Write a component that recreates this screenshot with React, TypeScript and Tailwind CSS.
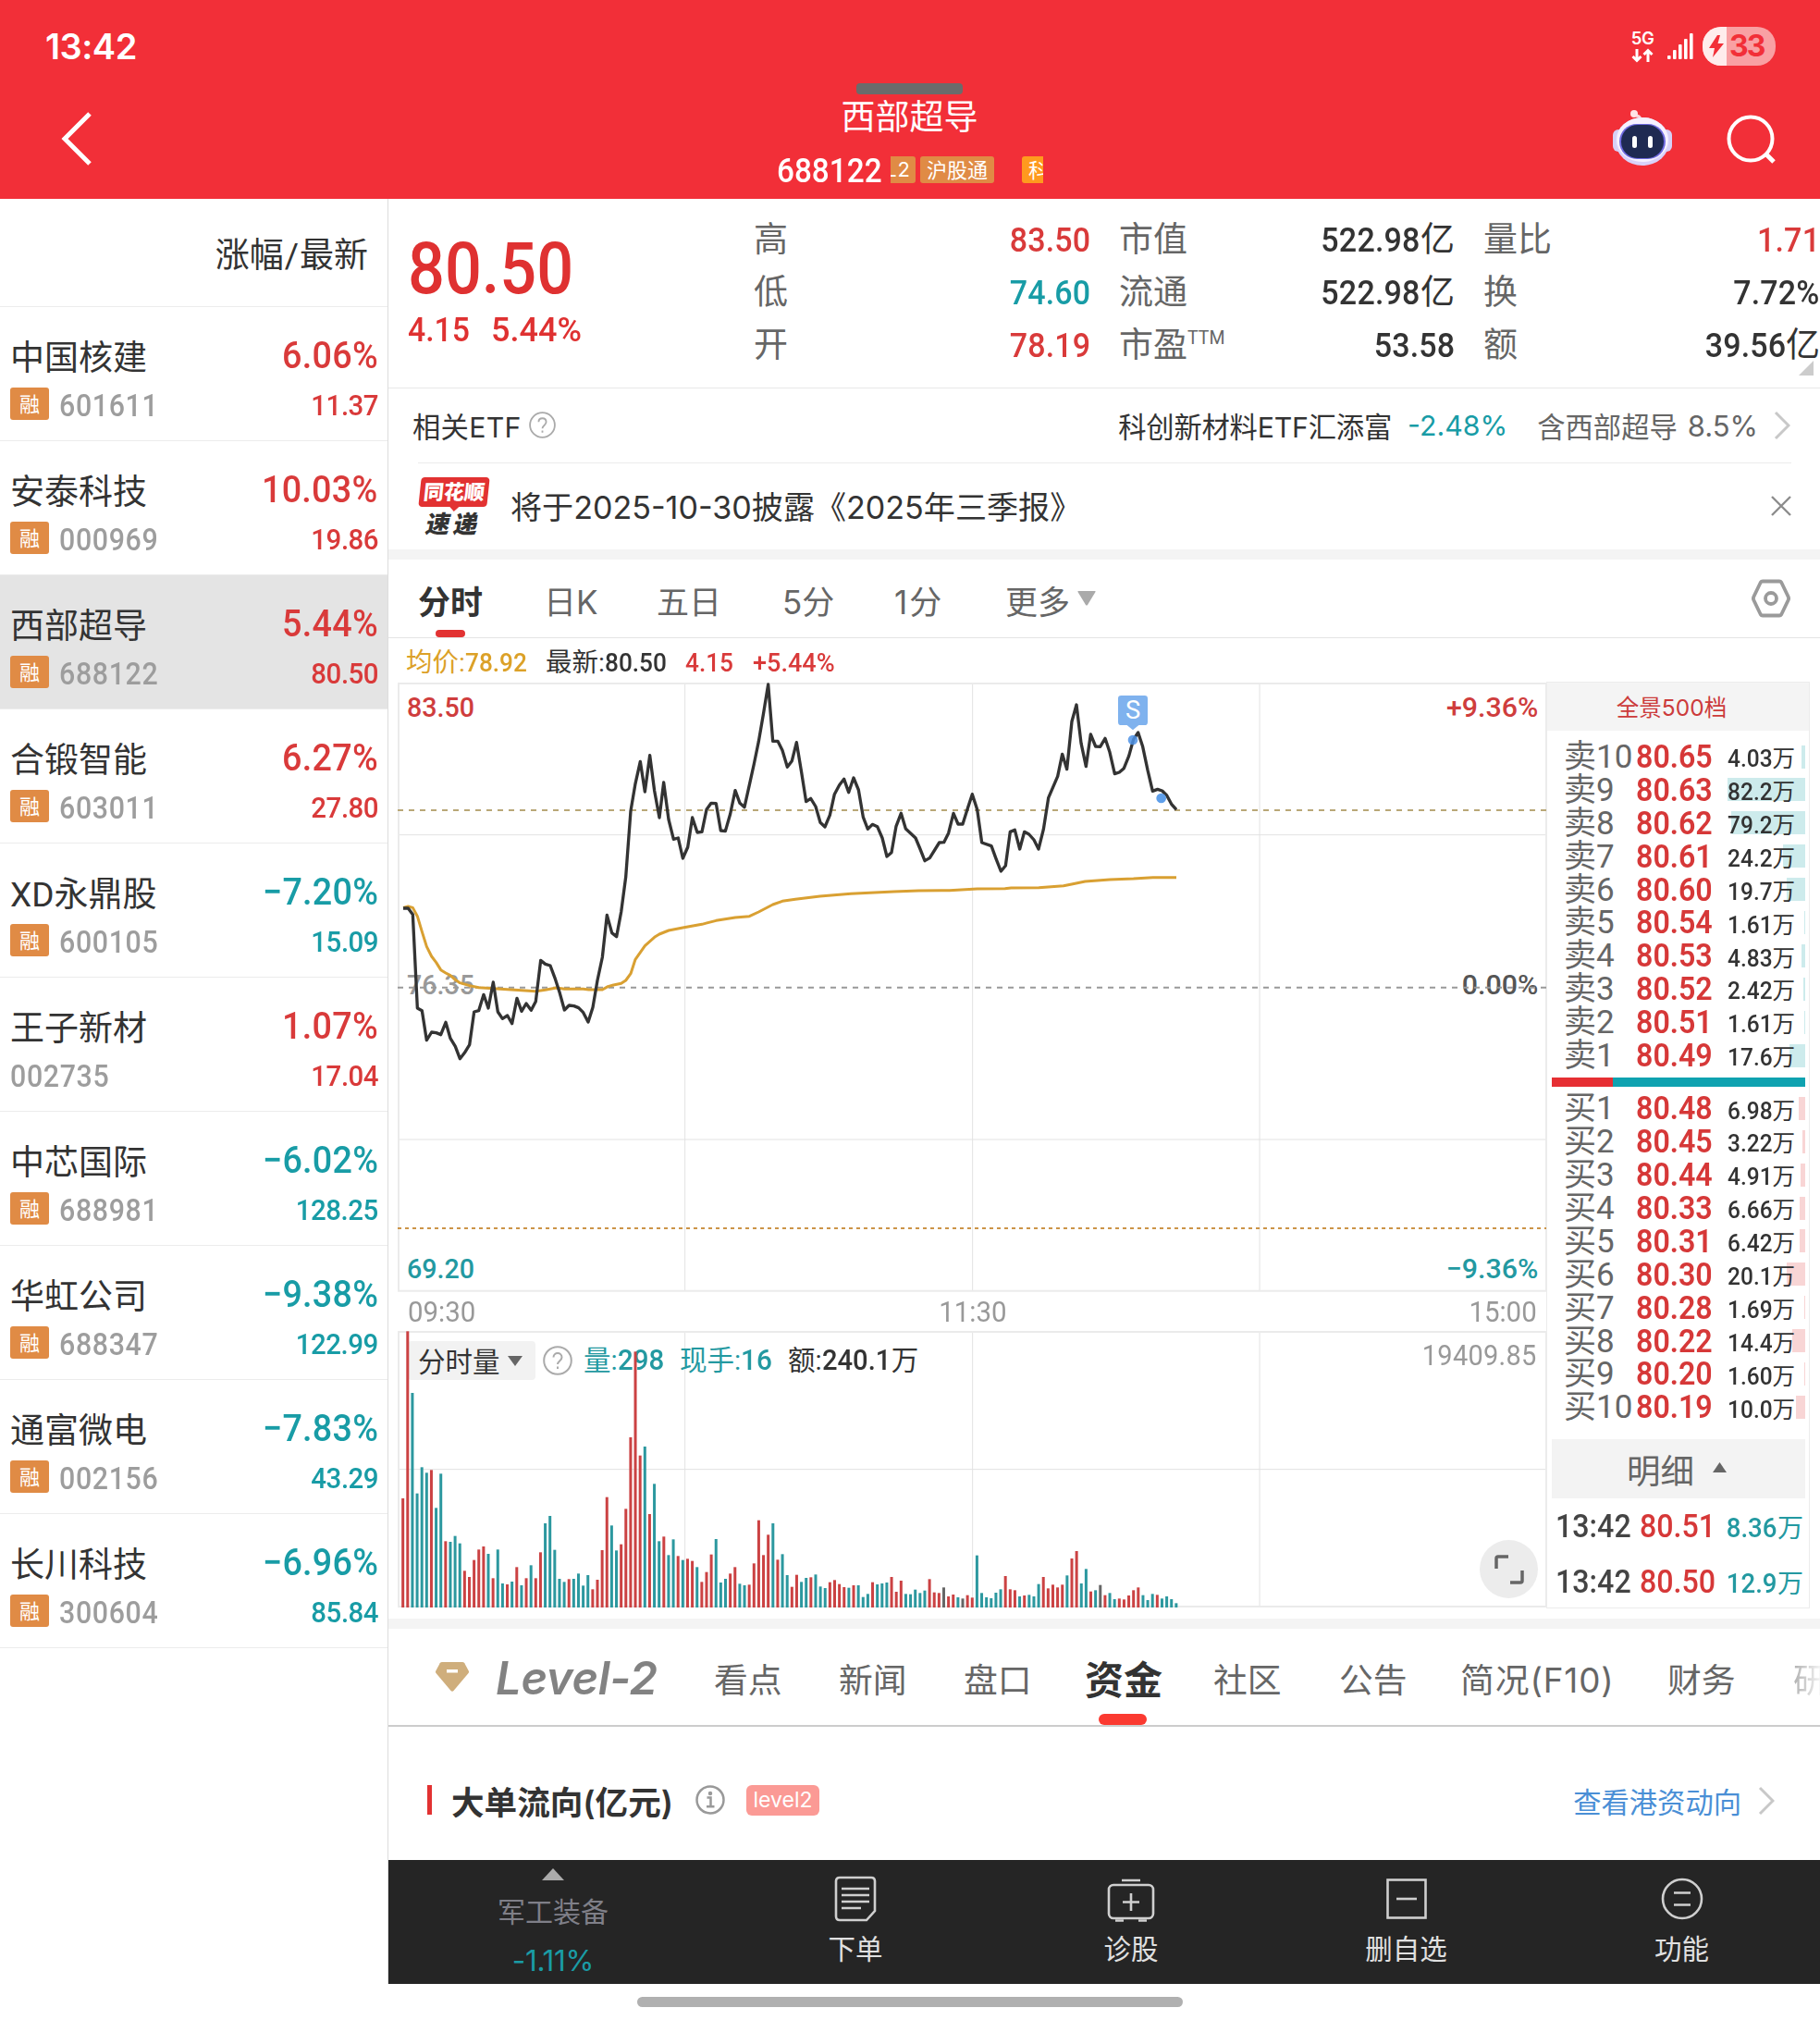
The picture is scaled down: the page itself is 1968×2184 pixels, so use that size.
import React from "react";

const stocks = [
  { name: "中国核建", code: "601611", pct: "6.06%", price: "11.37", up: true, margin: true },
  { name: "安泰科技", code: "000969", pct: "10.03%", price: "19.86", up: true, margin: true },
  { name: "西部超导", code: "688122", pct: "5.44%", price: "80.50", up: true, margin: true, active: true },
  { name: "合锻智能", code: "603011", pct: "6.27%", price: "27.80", up: true, margin: true },
  { name: "XD永鼎股", code: "600105", pct: "−7.20%", price: "15.09", up: false, margin: true },
  { name: "王子新材", code: "002735", pct: "1.07%", price: "17.04", up: true, margin: false },
  { name: "中芯国际", code: "688981", pct: "−6.02%", price: "128.25", up: false, margin: true },
  { name: "华虹公司", code: "688347", pct: "−9.38%", price: "122.99", up: false, margin: true },
  { name: "通富微电", code: "002156", pct: "−7.83%", price: "43.29", up: false, margin: true },
  { name: "长川科技", code: "300604", pct: "−6.96%", price: "85.84", up: false, margin: true },
];

// label, price, volume, depth bar width
const asks: [string, string, string, number][] = [
  ["卖10", "80.65", "4.03", 4],
  ["卖9", "80.63", "82.2", 84],
  ["卖8", "80.62", "79.2", 80],
  ["卖7", "80.61", "24.2", 24],
  ["卖6", "80.60", "19.7", 20],
  ["卖5", "80.54", "1.61", 1],
  ["卖4", "80.53", "4.83", 4],
  ["卖3", "80.52", "2.42", 2],
  ["卖2", "80.51", "1.61", 1],
  ["卖1", "80.49", "17.6", 17],
];

const bids: [string, string, string, number][] = [
  ["买1", "80.48", "6.98", 7],
  ["买2", "80.45", "3.22", 3],
  ["买3", "80.44", "4.91", 5],
  ["买4", "80.33", "6.66", 6],
  ["买5", "80.31", "6.42", 6],
  ["买6", "80.30", "20.1", 20],
  ["买7", "80.28", "1.69", 1],
  ["买8", "80.22", "14.4", 14],
  ["买9", "80.20", "1.60", 1],
  ["买10", "80.19", "10.0", 10],
];

// chart units are thirds of a pixel
const priceLine =
  "48,786 64,786 79,806 94,1110 109,1118 124,1214 140,1188 155,1190 170,1196 186,1156 201,1208 217,1234 232,1274 247,1255 263,1229 278,1122 293,1118 309,1066 324,1110 340,1026 355,1122 370,1144 386,1134 401,1160 417,1078 432,1120 447,1095 463,1117 478,1088 494,955 509,967 525,972 540,1012 555,1058 571,1116 586,1101 602,1103 617,1109 632,1124 648,1155 663,1108 678,1020 694,945 709,808 725,866 740,878 755,798 770,685 786,470 801,382 817,310 832,408 848,290 863,405 879,492 893,378 909,498 925,562 940,558 955,624 971,588 986,492 1002,540 1017,538 1032,466 1047,445 1063,446 1078,534 1093,536 1109,480 1125,404 1140,445 1155,458 1171,386 1186,318 1201,245 1217,152 1232,60 1247,244 1263,244 1278,274 1294,328 1309,308 1324,248 1340,345 1355,440 1370,430 1386,456 1401,508 1416,522 1432,484 1447,416 1463,386 1478,367 1493,410 1509,363 1525,402 1540,490 1555,529 1570,514 1586,521 1602,558 1617,618 1632,605 1647,520 1663,478 1678,528 1710,558 1725,594 1740,632 1756,623 1787,573 1802,572 1817,542 1833,478 1848,513 1863,513 1879,462 1894,416 1910,466 1925,573 1956,584 1971,625 1987,666 2002,648 2017,538 2032,532 2048,594 2063,538 2078,546 2094,564 2109,594 2125,530 2141,428 2171,358 2186,286 2201,335 2217,180 2232,126 2247,250 2263,326 2278,222 2294,261 2309,262 2325,235 2340,280 2356,350 2371,345 2386,332 2402,292 2417,238 2432,216 2447,262 2463,338 2479,406 2495,400 2510,405 2525,420 2540,448 2556,466";

const averageLine =
  "48,784 64,780 79,784 94,812 109,862 124,910 140,942 155,962 170,986 186,996 201,1004 217,1018 232,1028 263,1037 293,1043 340,1046 386,1049 432,1052 478,1055 509,1051 545,1044 571,1048 632,1048 650,1050 694,1050 712,1040 730,1035 755,1030 770,1020 786,998 801,952 832,908 863,880 879,870 909,858 955,849 1017,838 1063,826 1125,816 1171,812 1201,798 1247,774 1278,763 1320,757 1400,747 1500,739 1640,732 1720,729 1820,728 1910,723 2000,722 2020,720 2110,719 2190,713 2220,707 2260,699 2340,693 2417,690 2480,686 2556,686";

// r = up, t = down, g = flat, followed by the top of the bar
const volumes =
  "r720 r178 t378 t704 t619 t637 r628 t751 t640 r859 t861 t842 t866 r955 r975 r920 r886 r876 t900 r979 t886 t996 r999 t990 r943 t1002 r979 t937 r979 r895 t801 t777 t887 t981 t991 r982 t981 t964 t1003 t969 r1015 r984 r888 r716 t808 t889 r869 r754 r522 r244 r581 t552 r771 t673 t859 r844 t904 t853 r907 t920 r916 r923 t943 r991 r959 r902 t852 t993 t981 r964 r943 t997 t1002 r1000 r931 r791 r904 r838 t801 r919 t901 t969 r1007 r968 t991 t978 r976 t967 t1006 t1011 r992 r985 r998 r1008 t1010 r1002 t1002 t1040 t1030 r992 t999 t996 t993 r975 r1023 r987 t1030 t1031 t1016 t1027 t1019 r982 r1025 r1027 g1009 r1038 r1032 t1041 g1045 r1034 r1042 t905 t1027 t1041 t1044 t1026 t1015 r972 r1015 r1018 t1038 r1035 t1033 t1038 t998 r975 r1012 r1000 r1009 r1000 t970 r915 r891 t996 t949 r1022 t1018 g1001 r1034 t1027 t1047 r1045 r1048 r1035 r1018 r1009 t1034 t1050 t1030 r1033 t1045 t1038 t1047 t1060".split(
    " "
  );

const barColors: Record<string, string> = { r: "#cb4243", t: "#2c989f", g: "#666666" };

const NUM = "font-['Roboto','Noto_Sans_CJK_SC',sans-serif]";

// narrow digits, squeezed towards the side they are aligned to
const NARROW_L = "inline-block origin-left scale-x-[0.92]";
const NARROW_R = "inline-block origin-right scale-x-[0.92]";

const Header = () => (
  <header className="relative h-[215px] shrink-0 bg-[#f22f38] text-white">
    <div className="flex h-[100px] items-center justify-between pl-[49px] pr-[48px]">
      <div className="text-[38px] font-semibold tracking-[-0.5px]">13:42</div>
      <div className="flex items-center">
        <div className="flex w-[24px] flex-col items-center">
          <span className="text-[18.5px] font-semibold leading-[17px] tracking-[-0.5px]">5G</span>
          <svg className="mt-[2px] h-[16px] w-[24px]" viewBox="0 0 24 16" fill="none" stroke="white" strokeWidth="3">
            <path d="M6 1v13M1.500 9L6 13.500 10.500 9M18 15V2M13.500 7L18 2.500 22.500 7" />
          </svg>
        </div>
        <svg className="ml-[15px] h-[28px] w-[28px]" viewBox="0 0 28 28" fill="white">
          <rect x="0" y="24" width="3.600" height="4" rx="1" />
          <rect x="6" y="18" width="3.600" height="10" rx="1" />
          <rect x="12" y="12" width="3.600" height="16" rx="1" />
          <rect x="18" y="6" width="3.600" height="22" rx="1" />
          <rect x="24" y="0" width="3.600" height="28" rx="1" />
        </svg>
        <div className="ml-[10px] flex h-[42px] w-[79px] items-center overflow-hidden rounded-[20px] bg-[#f9a0a3]">
          <div className="flex h-full w-[26px] items-center justify-center bg-[#ffecec]">
            <svg className="ml-[4px] h-[24px] w-[16px]" viewBox="0 0 16 24" fill="#f22f38">
              <path d="M9 0L0 14h6L4 24 16 9H9.500L12 0z" />
            </svg>
          </div>
          <span className="ml-[3px] text-[32px] font-bold leading-none tracking-[-2px] text-[#f22f38]">33</span>
        </div>
      </div>
    </div>

    <div className="absolute left-[926px] top-[90px] h-[12px] w-[115px] rounded-[4px] bg-[#6b6b6b]" />

    <div className="flex h-[115px] items-start justify-between">
      <div className="flex h-[100px] w-[840px] items-center pl-[64px]">
        <svg className="h-[60px] w-[36px]" viewBox="0 0 36 60" fill="none" stroke="white" strokeWidth="5">
          <path d="M33 3L6 30l27 27" />
        </svg>
      </div>

      <div className="w-[288px]">
        <div className="h-[52px] pr-px text-center text-[37px] leading-[54px]">西部超导</div>
        <div className="flex h-[63px] items-center">
          <span className={`${NUM} w-[123px] pt-px text-[37px] font-medium leading-none`}>
            <span className="inline-block origin-left scale-x-[0.9]">688122</span>
          </span>
          <span className="flex h-[29px] w-[27px] justify-end overflow-hidden rounded-r-[3px] bg-[#e08b45] pr-[5px] text-[22px] leading-[29px] tracking-[1px]">
            L2
          </span>
          <span className="ml-[5px] h-[29px] w-[80px] rounded-[3px] bg-[#e08b45] text-center text-[22px] leading-[30px]">沪股通</span>
          <span className="ml-[30px] h-[29px] w-[23px] overflow-hidden rounded-l-[3px] bg-[#ff9a1e] pl-[7px] text-[22px] leading-[30px]">
            科
          </span>
        </div>
      </div>

      <div className="flex h-[100px] w-[840px] items-center justify-end pr-[46px]">
        <svg className="h-[64px] w-[66px]" viewBox="0 0 66 64">
          <path d="M31 16c1-6-1-9-5-9" fill="none" stroke="#f9d5dc" strokeWidth="3" />
          <circle cx="24" cy="5" r="4" fill="#ffe3e6" />
          <rect x="1" y="22" width="12" height="24" rx="6" fill="#d6d0f7" />
          <rect x="53" y="22" width="12" height="24" rx="6" fill="#d6d0f7" />
          <ellipse cx="33" cy="35" rx="29" ry="26" fill="#d9d2fa" />
          <ellipse cx="33" cy="33" rx="28" ry="24" fill="#f6f1ff" />
          <rect x="8" y="16" width="50" height="38" rx="19" fill="#6f6ae0" />
          <rect x="10" y="17" width="46" height="36" rx="18" fill="#1f2a52" />
          <rect x="22" y="29" width="5" height="13" rx="2.500" fill="white" />
          <rect x="39" y="29" width="5" height="13" rx="2.500" fill="white" />
        </svg>
        <svg className="ml-[57px] h-[56px] w-[56px]" viewBox="0 0 56 56" fill="none" stroke="white" strokeWidth="4">
          <circle cx="27" cy="28" r="23.500" />
          <path d="M43 44l9 9" strokeWidth="5" />
        </svg>
      </div>
    </div>
  </header>
);

const Sidebar = () => (
  <aside className={`${NUM} w-[420px] shrink-0 border-r border-[#dddddd]`}>
    <div className="flex h-[117px] items-center justify-end border-b border-[#ececec] pr-[21px] pt-[8px] text-[37px] text-[#333]">
      涨幅<span className="px-px">/</span>最新
    </div>
    {stocks.map((s) => (
      <div
        key={s.code}
        className={`h-[145px] border-b border-[#ececec] pl-[11px] pr-[10px] pt-[26px] ${s.active ? "bg-[#e4e4e4]" : ""}`}
      >
        <div className="flex h-[52px] items-center justify-between">
          <span className="pt-[6px] text-[37px] leading-none text-[#333]">{s.name}</span>
          <span className={`${NARROW_R} text-[41px] font-medium leading-none tracking-[0.3px] ${s.up ? "text-[#d93a3a]" : "text-[#189ca6]"}`}>
            {s.pct}
          </span>
        </div>
        <div className="flex h-[53px] items-center justify-between">
          <div className="flex items-center">
            {s.margin && (
              <span className="mr-[11px] h-[35px] w-[42px] rounded-[3px] bg-[#e08b45] text-center text-[22px] leading-[38px] text-white">
                融
              </span>
            )}
            <span className={`${NARROW_L} pt-[3px] text-[33px] font-medium leading-none tracking-[0.7px] text-[#9d9d9d]`}>{s.code}</span>
          </div>
          <span
            className={`${NARROW_R} pt-[3px] text-[32px] font-medium leading-none tracking-[-0.5px] ${s.up ? "text-[#d93a3a]" : "text-[#189ca6]"}`}
          >
            {s.price}
          </span>
        </div>
      </div>
    ))}
  </aside>
);

type StatProps = { label: string; value: string; unit?: string; color?: string; sup?: string };

const Stat = ({ label, value, unit = "", color = "text-[#333]", sup = "" }: StatProps) => (
  <div className={`${NUM} flex h-[57px] items-center justify-between`}>
    <span className="flex text-[37px] leading-[44px] text-[#666]">
      {label}
      {sup && <span className="text-[19.5px] leading-[28px]">{sup}</span>}
    </span>
    <span className={`text-[37px] leading-none ${color}`}>
      <span className={`${NARROW_R} font-medium tracking-[0.2px]`}>{value}</span>
      {unit}
    </span>
  </div>
);

const Quote = () => (
  <div className="relative flex h-[205px] shrink-0 border-b border-[#e8e8e8]">
    <div className={`${NUM} w-[395px] pl-[21px] pt-[31px] text-[#df3131]`}>
      <div className="h-[90px] origin-left scale-x-[0.9] text-[78px] font-medium leading-[90px]">80.50</div>
      <div className="flex h-[40px] items-center text-[37.5px] font-medium">
        <span className="w-[90px]">
          <span className="inline-block origin-left scale-x-[0.9]">4.15</span>
        </span>
        <span className="inline-block origin-left scale-x-[0.96]">5.44%</span>
      </div>
    </div>
    <div className="grid grid-cols-[364px_363px_364px] content-start gap-x-[31px] pt-[16px]">
      <div>
        <Stat label="高" value="83.50" color="text-[#d93a3a]" />
        <Stat label="低" value="74.60" color="text-[#189ca6]" />
        <Stat label="开" value="78.19" color="text-[#d93a3a]" />
      </div>
      <div>
        <Stat label="市值" value="522.98" unit="亿" />
        <Stat label="流通" value="522.98" unit="亿" />
        <Stat label="市盈" sup="TTM" value="53.58" />
      </div>
      <div>
        <Stat label="量比" value="1.71" color="text-[#d93a3a]" />
        <Stat label="换" value="7.72%" />
        <Stat label="额" value="39.56" unit="亿" />
      </div>
    </div>
    <svg className="absolute right-[7px] top-[175px] h-[16px] w-[16px]" viewBox="0 0 16 16" fill="#cccccc">
      <path d="M16 0v16H0z" />
    </svg>
  </div>
);

const Help = ({ size }: { size: string }) => (
  <svg className={size} viewBox="0 0 32 32" fill="none" stroke="#aaaaaa" strokeWidth="2">
    <circle cx="16" cy="16" r="14.800" />
    <path d="M11.500 12.500c0-6 9-6 9 0 0 4-4.500 4-4.500 7.500M16 22.500v2.500" />
  </svg>
);

const Chevron = () => (
  <svg className="h-[32px] w-[18px]" viewBox="0 0 18 32" fill="none" stroke="#c8c8c8" strokeWidth="3">
    <path d="M2 2l14 14L2 30" />
  </svg>
);

const News = () => (
  <>
    <div className="ml-[26px] mr-[32px] flex h-[80px] shrink-0 items-center text-[30.3px] text-[#333]">
      <span className="pt-[5px] tracking-[0.3px]">相关ETF</span>
      <Help size="ml-[8px] mb-[2px] h-[29px] w-[29px]" />
      <span className="ml-auto pt-[5px] tracking-[-0.2px]">科创新材料ETF汇添富</span>
      <span className="ml-[17px] pt-[2px] text-[#189ca6]">-2.48%</span>
      <span className="ml-[32px] pt-[5px] text-[#666]">含西部超导</span>
      <span className="ml-[11px] mr-[17px] pt-[2px] text-[31px] text-[#666]">8.5%</span>
      <Chevron />
    </div>
    <div className="ml-[32px] mr-[31px] flex h-[94px] shrink-0 items-center border-t border-[#ececec]">
      <div className="w-[78px] text-center font-black leading-none">
        <div className="relative mx-[2px] h-[32px] -skew-x-6 rounded-[4px] bg-[#e23232] text-[22px] leading-[33px] text-white">
          同花顺
          <svg className="absolute left-[33px] top-[31px] h-[6px] w-[12px]" viewBox="0 0 12 6" fill="#e23232">
            <path d="M0 0h12L6 6z" />
          </svg>
        </div>
        <div className="mt-[6px] -skew-x-12 text-[26px] tracking-[4px] text-[#333]">速递</div>
      </div>
      <span className="ml-[22px] pt-[3px] text-[34.1px] text-[#333]">将于2025-10-30披露《2025年三季报》</span>
      <svg className="ml-auto mb-[2px] h-[22px] w-[22px]" viewBox="0 0 22 22" stroke="#8c8c8c" strokeWidth="2.400">
        <path d="M1 1l20 20M21 1L1 21" />
      </svg>
    </div>
    <div className="h-[11px] shrink-0 bg-[#f4f4f4]" />
  </>
);

const PeriodTabs = () => (
  <>
    <div className="flex h-[85px] shrink-0 items-center border-b border-[#e4e4e4] pl-[32px] pr-[32px] pt-[8px] text-[35px] text-[#666]">
      <span className="relative flex h-full w-[136px] items-center font-semibold text-[#333]">
        分时
        <span className="absolute bottom-0 left-[19px] h-[8px] w-[32px] rounded-[4px] bg-[#e23232]" />
      </span>
      <span className="w-[122px]">日K</span>
      <span className="w-[136px]">五日</span>
      <span className="w-[121px]">5分</span>
      <span className="w-[120px] tracking-[2px]">1分</span>
      <span className="flex items-center gap-[8px]">
        更多
        <svg className="mb-[8px] h-[16px] w-[20px]" viewBox="0 0 20 16" fill="#aaaaaa">
          <path d="M1 0h18q1 0 .5 1L11 15q-1 1-2 0L.5 1Q0 0 1 0z" />
        </svg>
      </span>
      <svg className="mb-[8px] ml-auto h-[42px] w-[42px]" viewBox="0 0 42 42" fill="none" stroke="#9a9a9a" strokeWidth="3.800">
        <path d="M12 2.500h18q1.500 0 2.300 1.300l7.400 15.400q.8 1.800 0 3.600l-7.400 15.400q-.8 1.300-2.300 1.300H12q-1.500 0-2.300-1.300L2.300 22.800q-.8-1.800 0-3.600L9.700 3.800Q10.500 2.500 12 2.500z" />
        <circle cx="21" cy="21" r="6" />
      </svg>
    </div>
    <div className={`${NUM} flex h-[48px] shrink-0 items-center pl-[19px] pt-[6px] text-[28.5px] font-medium`}>
      <span className="w-[151px] text-[#dca128]">
        <span className="font-normal">均价:</span>
        <span className={NARROW_L}>78.92</span>
      </span>
      <span className="w-[151px] text-[#333]">
        <span className="font-normal">最新:</span>
        <span className={NARROW_L}>80.50</span>
      </span>
      <span className="w-[73px] text-[#d93a3a]">
        <span className={NARROW_L}>4.15</span>
      </span>
      <span className="inline-block origin-left scale-x-[0.95] text-[#d93a3a]">+5.44%</span>
    </div>
  </>
);

const PriceChart = () => (
  <svg className="ml-[10px] h-[659px] w-[1242px] shrink-0 font-['Roboto'] font-medium" viewBox="30 54 3726 1977" fontSize="91">
    <g fill="none" stroke="#e2e2e2" strokeWidth="3">
      <path d="M962 57V2027M1895 57V2027M2826 57V2027M33 548H3756M33 1536H3756" />
      <path d="M33 57H3756V2027H33z" stroke="#ebebeb" strokeWidth="6" />
    </g>
    <text x="60" y="165" fill="#cf3d3d" textLength="219" lengthAdjust="spacingAndGlyphs">83.50</text>
    <text x="60" y="1064" fill="#999999" textLength="219" lengthAdjust="spacingAndGlyphs">76.35</text>
    <text x="60" y="1985" fill="#2399a1" textLength="219" lengthAdjust="spacingAndGlyphs">69.20</text>
    <text x="3730" y="165" fill="#cf3d3d" textAnchor="end">+9.36%</text>
    <text x="3730" y="1064" fill="#555555" textAnchor="end">0.00%</text>
    <text x="3730" y="1985" fill="#2399a1" textAnchor="end">−9.36%</text>
    <path d="M30 468H3756" stroke="#b9a777" strokeWidth="6" strokeDasharray="18 18" />
    <path d="M30 1043H3756" stroke="#999999" strokeWidth="6" strokeDasharray="18 18" />
    <path d="M30 1824H3756" stroke="#cc9448" strokeWidth="6" strokeDasharray="12 12" />
    <polyline points={averageLine} fill="none" stroke="#d9a032" strokeWidth="9" strokeLinejoin="round" />
    <polyline points={priceLine} fill="none" stroke="#333333" strokeWidth="10" strokeLinejoin="round" />
    <g fill="#7fb2ee">
      <rect x="2367" y="96" width="96" height="96" rx="10" />
      <path d="M2393 190h44l-22 18z" />
      <text x="2415" y="172" fill="white" fontSize="82" fontWeight="400" textAnchor="middle">S</text>
    </g>
    <circle cx="2415" cy="240" r="16" fill="#4f93e6" fillOpacity="0.850" />
    <circle cx="2507" cy="429" r="16" fill="#5f9fea" />
  </svg>
);

const VolumeChart = () => (
  <div className="relative ml-[10px] h-[300px] w-[1242px] shrink-0">
    <svg className="absolute inset-0 h-full w-full" viewBox="30 174 3726 900" fill="none" stroke="#e2e2e2" strokeWidth="3">
      <path d="M962 180V1074M1895 180V1074M2826 180V1074M33 626H3756" />
      <path d="M33 180H3756V1071H33z" stroke="#ebebeb" strokeWidth="6" />
    </svg>
    <div className={`${NUM} relative flex h-[54px] items-center pl-[11px] pt-[12px] text-[29.5px] font-medium`}>
      <span className="flex h-[42px] w-[138px] items-center rounded-[4px] bg-[#f2f2f2] pl-[11px] pt-[4px] font-normal text-[#333]">
        分时量
        <svg className="mb-[4px] ml-[8px] h-[11px] w-[16px]" viewBox="0 0 16 11" fill="#666666">
          <path d="M0 0h16L8 11z" />
        </svg>
      </span>
      <Help size="ml-[8px] h-[32px] w-[32px]" />
      <span className="ml-[12px] w-[104px] text-[#2399a1]">
        <span className="font-normal">量:</span>
        <span className="inline-block origin-left scale-x-[0.95] text-[31px]">298</span>
      </span>
      <span className="w-[117px] text-[#2399a1]">
        <span className="font-normal">现手:</span>
        <span className="inline-block origin-left scale-x-[0.96] text-[31px]">16</span>
      </span>
      <span className="text-[#333]">
        <span className="font-normal">额:</span>
        <span className="mr-[-4px] inline-block origin-left scale-x-[0.94] text-[31px]">240.1</span>
        <span className="font-normal">万</span>
      </span>
      <span className={`${NARROW_R} mb-[11px] ml-auto mr-[10px] text-[31.5px] font-normal tracking-[0.3px] text-[#999]`}>19409.85</span>
    </div>
    <svg className="absolute inset-0 h-full w-full" viewBox="30 174 3726 900">
      {volumes.map((v, i) => {
        const top = Number(v.slice(1));
        return <rect key={i} x={42.5 + i * 15.39} y={top} width="9" height={1074 - top} fill={barColors[v[0]]} />;
      })}
    </svg>
    <div className="absolute left-[1170px] top-[227px] flex h-[63px] w-[63px] items-center justify-center rounded-full bg-[#ececec]">
      <svg className="h-[32px] w-[32px]" viewBox="0 0 32 32" fill="none" stroke="#666666" strokeWidth="3.500">
        <path d="M2 15V4q0-2 2-2h11M30 17v11q0 2-2 2H17" />
      </svg>
    </div>
  </div>
);

const DepthRow = ({ row, bar }: { row: [string, string, string, number]; bar: string }) => (
  <div className={`${NUM} relative flex h-[35.9px] items-center pl-[18px] leading-none`}>
    <div className={`absolute right-[4px] top-[5px] h-[25px] ${bar}`} style={{ width: row[3] }} />
    <span className="w-[78px] whitespace-nowrap text-[35px] text-[#666]">{row[0]}</span>
    <span className={`${NARROW_L} text-[35px] font-semibold text-[#d63838]`}>{row[1]}</span>
    <span className="relative ml-auto pr-[15px] pt-[4px] text-[26px] font-medium text-[#333]">
      <span className="inline-block origin-right scale-x-[0.94]">{row[2]}</span>
      <span className="text-[24.5px] font-normal">万</span>
    </span>
  </div>
);

const OrderBook = () => (
  <div className="mt-[-1px] h-[1002px] w-[285px] shrink-0 border border-[#ececec]">
    <div className="h-[52px] bg-[#f4f4f4] pr-[14px] pt-px text-center text-[24.5px] leading-[52px] text-[#cc3b3b]">全景500档</div>
    <div className="pt-[10.5px]">
      {asks.map((r) => (
        <DepthRow key={r[0]} row={r} bar="bg-[#cdebec]" />
      ))}
    </div>
    <div className="ml-[5px] mt-[6px] flex h-[10px] w-[274px]">
      <div className="w-[66px] bg-[#e62f33]" />
      <div className="flex-1 bg-[#0fa2b0]" />
    </div>
    <div className="pt-[5.5px]">
      {bids.map((r) => (
        <DepthRow key={r[0]} row={r} bar="bg-[#f8d5d5]" />
      ))}
    </div>
    <div className="ml-[5px] mt-[16px] flex h-[64px] w-[274px] items-center justify-center bg-[#f3f3f3] pr-[4px] pt-[8px] text-[36.5px] text-[#666]">
      明细
      <svg className="mb-[10px] ml-[20px] h-[11px] w-[15px]" viewBox="0 0 15 11" fill="#666666">
        <path d="M0 11h15L7.500 0z" />
      </svg>
    </div>
    {[
      ["80.51", "8.36"],
      ["80.50", "12.9"],
    ].map((t) => (
      <div key={t[0]} className={`${NUM} flex h-[59.5px] items-center pl-[9px] pr-[6px] pt-[2px] text-[35px] font-medium leading-none`}>
        <span className="w-[91px] text-[#444]">
          <span className={NARROW_L}>13:42</span>
        </span>
        <span className={`${NARROW_L} text-[#d63838]`}>{t[0]}</span>
        <span className="ml-auto pt-[3px] text-[30px] text-[#2399a1]">
          <span className={NARROW_R}>{t[1]}</span>
          <span className="text-[28px] font-normal">万</span>
        </span>
      </div>
    ))}
  </div>
);

const SectionTabs = () => (
  <>
    <div className="h-[11px] shrink-0 bg-[#f4f4f4]" />
    <div className="flex h-[106px] shrink-0 items-center overflow-hidden whitespace-nowrap border-b-2 border-[#cccccc] pl-[51px] pt-[7px] text-[36.8px] text-[#666] *:shrink-0">
      <svg className="mb-[7px] h-[32px] w-[36px]" viewBox="0 0 36 32">
        <path d="M7 0h22q1.500 0 2.300 1.200L36 10q.3 1-.5 2L19.500 31q-1.500 1.400-3 0L.5 12Q-.3 11 0 10L4.700 1.200Q5.500 0 7 0z" fill="#cfae7c" />
        <rect x="12" y="8" width="12" height="3.500" fill="white" />
      </svg>
      <span className="mb-[4px] ml-[29px] w-[236px] text-[49px] font-semibold italic leading-none tracking-[-0.3px] text-[#828282]">
        Level-2
      </span>
      <span className="w-[135px]">看点</span>
      <span className="w-[135px]">新闻</span>
      <span className="w-[131px]">盘口</span>
      <span className="relative flex h-full w-[139px] items-center text-[42px] font-bold text-[#333]">
        资金
        <span className="absolute bottom-0 left-[15px] h-[12px] w-[52px] rounded-[6px] bg-[#fb3a31]" />
      </span>
      <span className="w-[136px]">社区</span>
      <span className="w-[131px]">公告</span>
      <span className="w-[224px] tracking-[0.9px]">简况(F10)</span>
      <span className="w-[136px]">财务</span>
      <span className="bg-linear-to-r from-[#b0b0b0] to-[#f4f4f4] to-80% bg-clip-text text-transparent">研</span>
    </div>
  </>
);

const FlowHeading = () => (
  <div className="flex h-[144px] shrink-0 items-center pl-[42px] pr-[49px] pt-[20px]">
    <span className="mb-[6px] h-[32px] w-[5px] bg-[#e23232]" />
    <span className="ml-[21px] pt-[2px] text-[35.6px] font-semibold text-[#333]">大单流向(亿元)</span>
    <svg className="mb-[6px] ml-[24px] h-[32px] w-[32px]" viewBox="0 0 32 32" fill="none" stroke="#999999" strokeWidth="2.500">
      <circle cx="16" cy="16" r="14.500" />
      <path d="M12.500 13.500h4V23M12 23.200h8.500" />
      <circle cx="16" cy="9" r="1" fill="#999999" />
    </svg>
    <span className="mb-[6px] ml-[23px] h-[33px] w-[79px] rounded-[6px] bg-[#fb9a95] text-center text-[23px] leading-[32px] text-white">level2</span>
    <span className="ml-auto mr-[18px] pt-[2px] text-[30.3px] text-[#4a8fd6]">查看港资动向</span>
    <span className="mb-[4px]">
      <Chevron />
    </span>
  </div>
);

const BottomBar = () => (
  <nav className="flex h-[134px] shrink-0 bg-[#252525] text-[29.5px] text-[#e0e0e0] *:shrink-0">
    <div className="flex w-[356px] flex-col items-center pt-[9px]">
      <svg className="h-[13px] w-[24px]" viewBox="0 0 24 13" fill="#ababab">
        <path d="M0 13h24L12 0z" />
      </svg>
      <span className="mt-[12px] text-[30px] leading-[44px] text-[#7f7f88]">军工装备</span>
      <span className="mt-[9px] text-[31.5px] leading-[44px] tracking-[-0.3px] text-[#1a9ca5]">-1.11%</span>
    </div>
    <div className="flex w-[298px] flex-col items-center pt-[16px]">
      <svg className="h-[52px] w-[48px]" viewBox="0 0 48 52" fill="none" stroke="#cfcfcf" strokeWidth="2.600">
        <path d="M7 3h34q4 0 4 4v32l-9 10H7q-4 0-4-4V7q0-4 4-4z" />
        <path d="M9 15h30M9 22h30M9 29h30M9 36h21" />
      </svg>
      <span className="mt-[6px] leading-[44px]">下单</span>
    </div>
    <div className="flex w-[298px] flex-col items-center pt-[16px]">
      <svg className="h-[52px] w-[54px]" viewBox="0 0 54 52" fill="none" stroke="#cfcfcf" strokeWidth="2.600">
        <rect x="3" y="11" width="48" height="36" rx="5" />
        <path d="M17 6h20M10 49.500h9M35 49.500h9M27 20v19M18 29.500h18" />
      </svg>
      <span className="mt-[6px] leading-[44px]">诊股</span>
    </div>
    <div className="flex w-[297px] flex-col items-center pt-[16px]">
      <svg className="h-[52px] w-[48px]" viewBox="0 0 48 52" fill="none" stroke="#cfcfcf" strokeWidth="2.600">
        <rect x="3.500" y="5.500" width="41" height="41" />
        <path d="M13 26h22" />
      </svg>
      <span className="mt-[6px] leading-[44px]">删自选</span>
    </div>
    <div className="flex w-[299px] flex-col items-center pt-[16px]">
      <svg className="h-[52px] w-[48px]" viewBox="0 0 48 52" fill="none" stroke="#cfcfcf" strokeWidth="2.600">
        <circle cx="24" cy="26" r="21" />
        <path d="M15 19.500h18M15 32.500h18" />
      </svg>
      <span className="mt-[6px] leading-[44px]">功能</span>
    </div>
  </nav>
);

const App = () => {
  return (
    <div className="flex h-[2184px] w-[1968px] flex-col overflow-hidden bg-white font-['Inter','Noto_Sans_CJK_SC',sans-serif]">
      <Header />

      <div className="flex h-[1930px] shrink-0">
        <Sidebar />

        <main className="flex w-[1548px] flex-col overflow-hidden">
          <Quote />
          <News />
          <PeriodTabs />

          <div className="flex h-[1012px] shrink-0">
            <div className="flex w-[1252px] flex-col">
              <PriceChart />
              <div className={`${NUM} flex h-[41px] shrink-0 items-center justify-between pl-[21px] pr-[10px] pt-px text-[32px] text-[#999]`}>
                <span className={NARROW_L}>09:30</span>
                <span className="inline-block scale-x-[0.92]">11:30</span>
                <span className={NARROW_R}>15:00</span>
              </div>
              <VolumeChart />
            </div>
            <OrderBook />
          </div>

          <SectionTabs />
          <FlowHeading />
          <BottomBar />
        </main>
      </div>

      <div className="flex flex-1 justify-center pt-[14px]">
        <div className="h-[11px] w-[590px] rounded-full bg-[#b0b0b0]" />
      </div>
    </div>
  );
};

export default App;
